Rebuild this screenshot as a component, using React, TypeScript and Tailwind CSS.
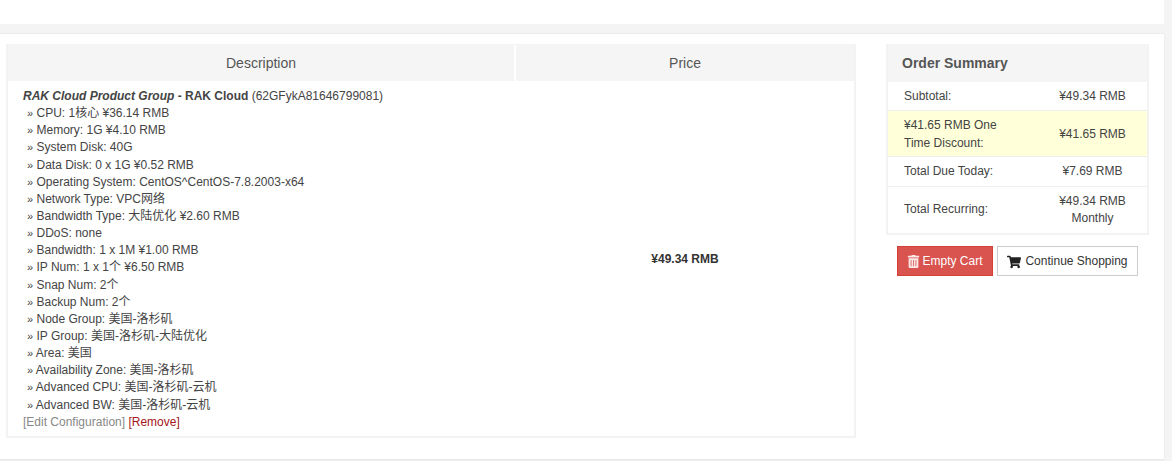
import { FaShoppingCart, FaTrashAlt } from "react-icons/fa";

const options = [
  "CPU: 1核心 ¥36.14 RMB",
  "Memory: 1G ¥4.10 RMB",
  "System Disk: 40G",
  "Data Disk: 0 x 1G ¥0.52 RMB",
  "Operating System: CentOS^CentOS-7.8.2003-x64",
  "Network Type: VPC网络",
  "Bandwidth Type: 大陆优化 ¥2.60 RMB",
  "DDoS: none",
  "Bandwidth: 1 x 1M ¥1.00 RMB",
  "IP Num: 1 x 1个 ¥6.50 RMB",
  "Snap Num: 2个",
  "Backup Num: 2个",
  "Node Group: 美国-洛杉矶",
  "IP Group: 美国-洛杉矶-大陆优化",
  "Area: 美国",
  "Availability Zone: 美国-洛杉矶",
  "Advanced CPU: 美国-洛杉矶-云机",
  "Advanced BW: 美国-洛杉矶-云机",
];

function App() {
  return (
    <div className="h-[461px] w-[1172px] overflow-hidden bg-[#f4f4f4] font-['Liberation_Sans','Noto_Sans_CJK_SC',sans-serif] text-[12px] leading-[17.14px] text-[#444]">
      <div className="h-6 w-[1164px] bg-white" />

      {/* Main panel */}
      <div className="mt-[9px] flex h-[426px] w-[1164px] items-start border-t border-[#ececec] bg-white pl-[6px] pt-[10px] shadow-[0_1px_2px_rgba(0,0,0,0.08)]">
        {/* Cart table */}
        <div className="w-[850px] border-2 border-t border-[#f3f3f3]">
          <div className="flex h-[36px] bg-[#f5f5f5] text-[14px] text-[#555]">
            <div className="flex w-[508px] items-center justify-center border-r-2 border-white pt-[2px]">Description</div>
            <div className="flex flex-1 items-center justify-center pt-[2px]">Price</div>
          </div>
          <div className="flex h-[355px]">
            <div className="w-[508px] pl-[15px] pt-[7px]">
              <div>
                <b className="italic">RAK Cloud Product Group</b> <b>- RAK Cloud</b> (62GFykA81646799081)
              </div>
              {options.map((item) => (
                <div key={item} className="pl-[4px]">
                  <span className="text-[11px]">»</span> {item}
                </div>
              ))}
              <div>
                <span className="text-[#888]">[Edit Configuration]</span>{" "}
                <span className="text-[#a4161c]">[Remove]</span>
              </div>
            </div>
            <div className="flex flex-1 items-center justify-center pt-[3px] font-bold text-[#333]">¥49.34 RMB</div>
          </div>
        </div>

        {/* Order summary */}
        <div className="ml-[30px] flex w-[263px] flex-col items-center">
          <div className="w-full border-2 border-t-0 border-[#f3f3f3] bg-white">
            <div className="flex h-[38px] items-center bg-[#f5f5f5] pl-[14px] pt-[2px] text-[14px] font-bold text-[#555]">Order Summary</div>
            <div className="flex h-[29px] items-center border-b border-[#eee] pt-[1px]">
              <div className="w-[150px] pl-[16px]">Subtotal:</div>
              <div className="flex-1 text-center">¥49.34 RMB</div>
            </div>
            <div className="flex h-[46px] items-center border-b border-[#eee] bg-[#ffffd9] pt-[2px]">
              <div className="w-[150px] pl-[16px] pr-[20px]">¥41.65 RMB One Time Discount:</div>
              <div className="flex-1 text-center">¥41.65 RMB</div>
            </div>
            <div className="flex h-[30px] items-center border-b border-[#eee]">
              <div className="w-[150px] pl-[16px]">Total Due Today:</div>
              <div className="flex-1 text-center">¥7.69 RMB</div>
            </div>
            <div className="flex h-[46px] items-center">
              <div className="w-[150px] pl-[16px]">Total Recurring:</div>
              <div className="flex-1 text-center">
                ¥49.34 RMB
                <br />
                Monthly
              </div>
            </div>
          </div>
          <div className="mt-[11px] flex gap-1">
            <button className="flex h-[30px] w-[96px] items-center justify-center gap-[2px] border border-[#d43f3a] bg-[#d9534f] pt-[1px] text-white">
              <FaTrashAlt className="text-[13px] text-[#fbe9e8]" />
              Empty Cart
            </button>
            <button className="flex h-[30px] w-[141px] items-center justify-center gap-[4px] border border-[#ccc] bg-white pt-[1px] text-[#333]">
              <FaShoppingCart className="text-[14px] text-[#222]" />
              Continue Shopping
            </button>
          </div>
        </div>
      </div>
    </div>
  );
}

export default App;
